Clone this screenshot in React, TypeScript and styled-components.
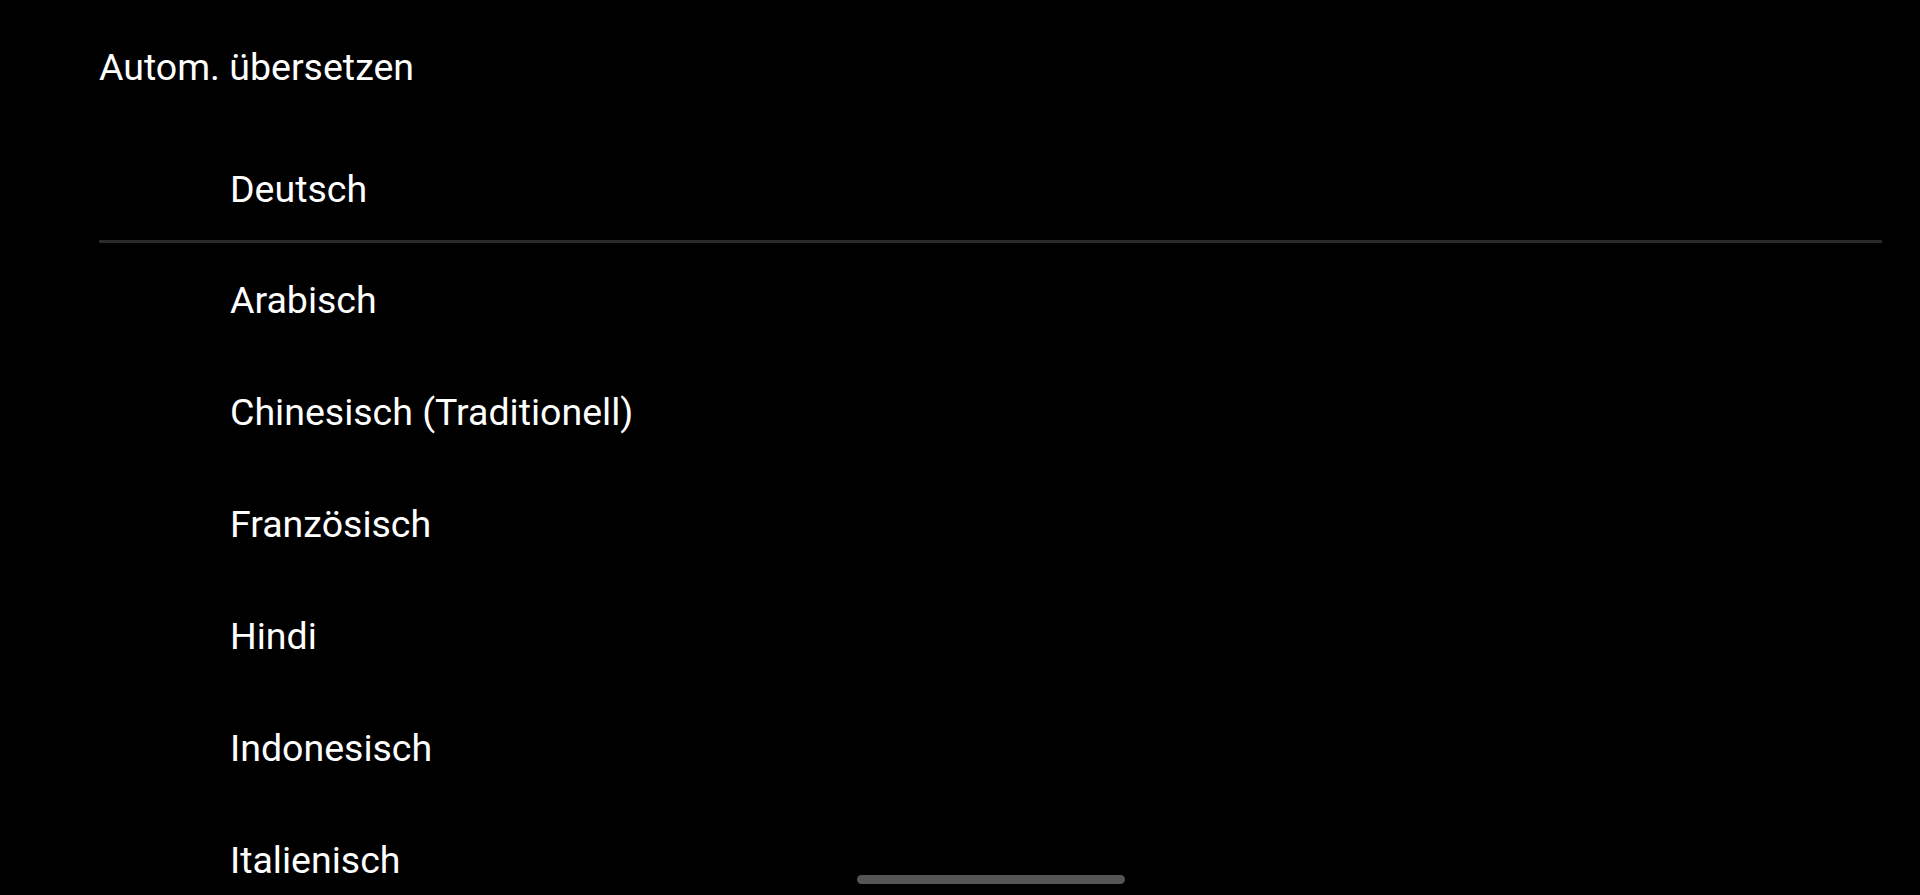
import React from "react";
import styled, { createGlobalStyle } from "styled-components";

const GlobalStyle = createGlobalStyle`
  html, body {
    margin: 0;
    padding: 0;
    background: #000;
    overflow: hidden;
    height: 100%;
  }
  body {
    font-family: Roboto, "Noto Sans", sans-serif;
    color: #fff;
  }
`;

const Screen = styled.div`
  width: 1920px;
  height: 895px;
  background: #000;
  overflow: hidden;
  padding: 46px 38px 0 99px;
  box-sizing: border-box;
`;

const Title = styled.h1`
  margin: 0;
  font-size: 37.5px;
  font-weight: 400;
  line-height: 42px;
  color: #fff;
`;

const SelectedRow = styled.div`
  margin-top: 45px;
  height: 106px;
  padding: 35px 0 0 131px;
  box-sizing: border-box;
  font-size: 37.5px;
  line-height: 42px;
`;

const Divider = styled.div`
  height: 3px;
  background: #2a2a2a;
  margin-top: 1px;
`;

const List = styled.div`
  margin-top: 1px;
  display: flex;
  flex-direction: column;
`;

const Row = styled.div`
  height: 112px;
  display: flex;
  align-items: center;
  padding-left: 131px;
  font-size: 37.5px;
  line-height: 42px;
`;

const HomeBar = styled.div`
  position: fixed;
  left: 857px;
  top: 875px;
  width: 268px;
  height: 9px;
  border-radius: 5px;
  background: #555;
`;

const languages = [
  "Arabisch",
  "Chinesisch (Traditionell)",
  "Französisch",
  "Hindi",
  "Indonesisch",
  "Italienisch",
];

export default function App() {
  return (
    <>
      <GlobalStyle />
      <Screen>
        <Title>Autom. übersetzen</Title>
        <SelectedRow>Deutsch</SelectedRow>
        <Divider />
        <List>
          {languages.map((l) => (
            <Row key={l}>{l}</Row>
          ))}
        </List>
      </Screen>
      <HomeBar />
    </>
  );
}
